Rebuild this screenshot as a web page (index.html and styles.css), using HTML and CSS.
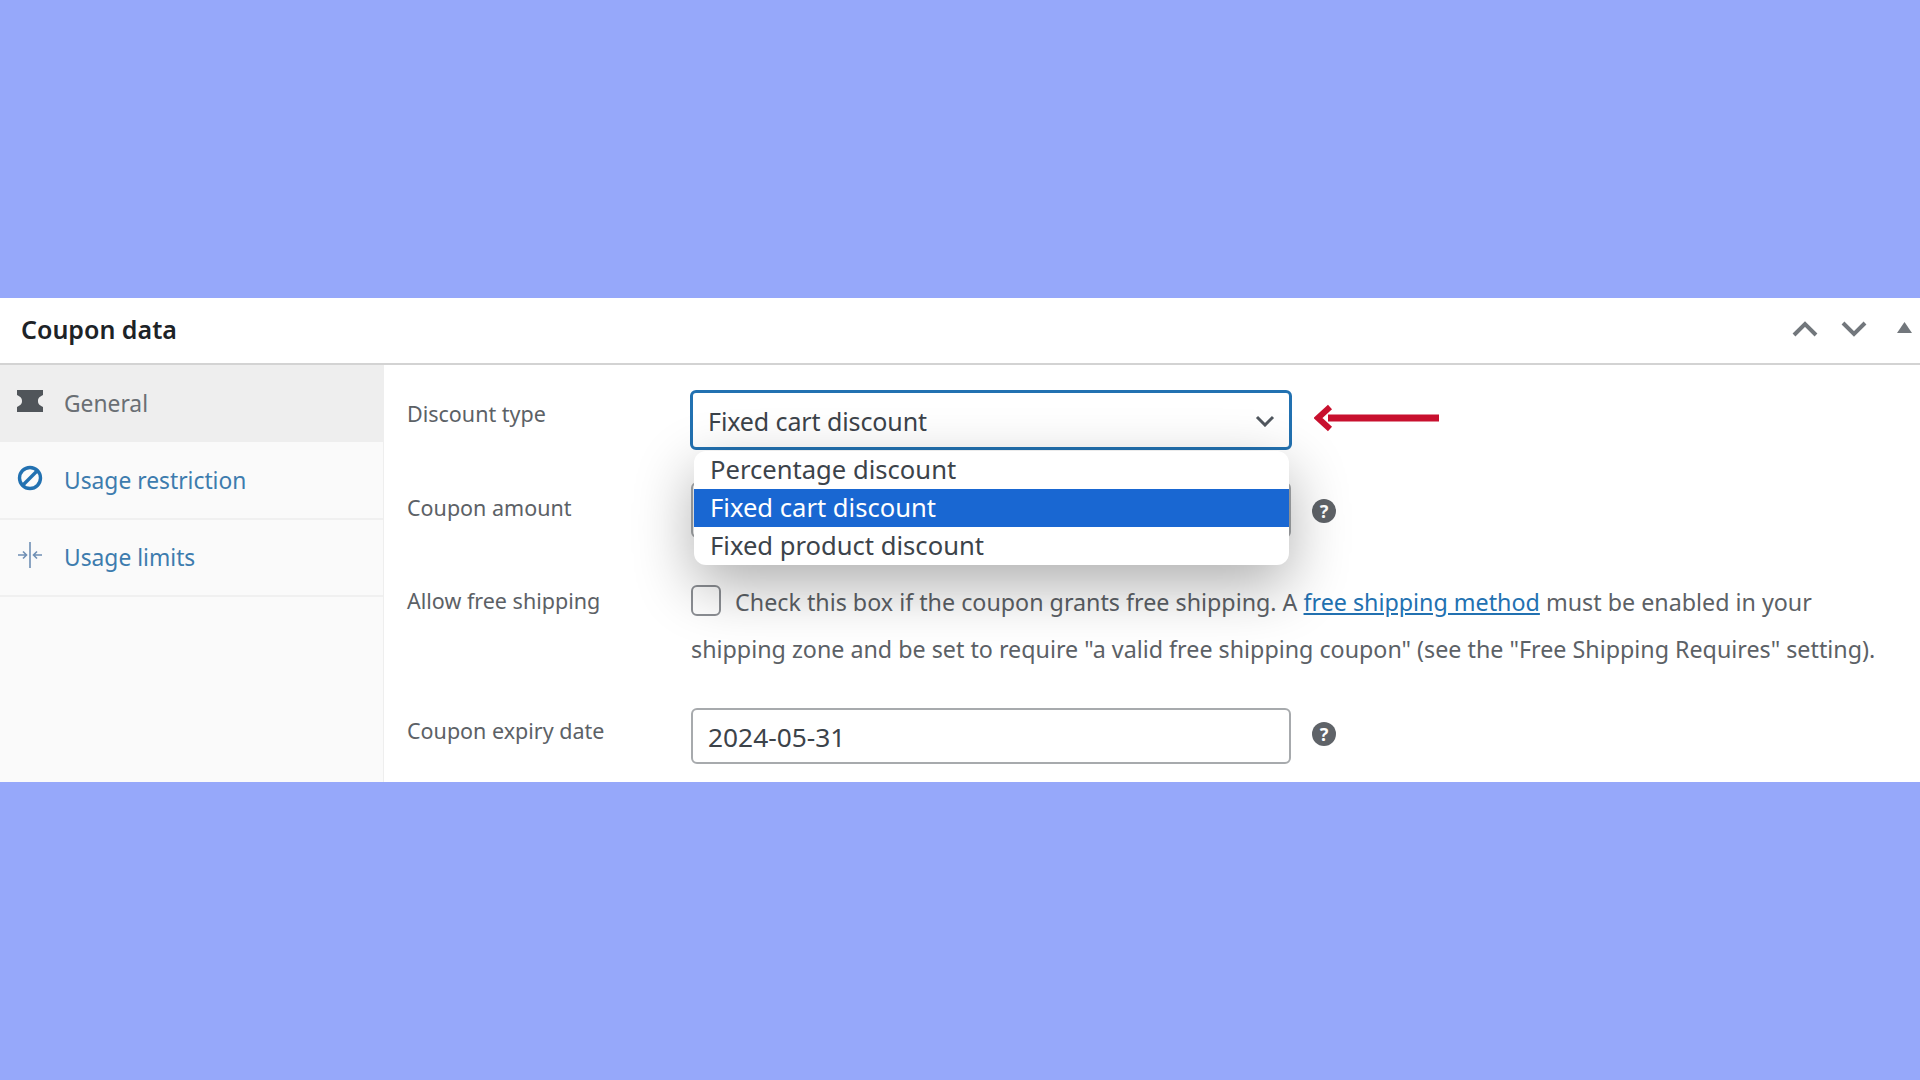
FILE: index.html
```html
<!DOCTYPE html>
<html lang="en">
<head>
  <meta charset="UTF-8">
  <title>Coupon data</title>
  <link rel="stylesheet" href="styles.css">
</head>
<body>

<div class="coupon-box">
  <div class="box-header">
    <h2>Coupon data</h2>
    <div class="box-actions">
      <svg width="26" height="16" viewBox="0 0 26 16"><path d="M2 14 L13 3 L24 14" /></svg>
      <svg width="26" height="16" viewBox="0 0 26 16"><path d="M2 2 L13 13 L24 2" /></svg>
      <svg class="toggle" width="15" height="11" viewBox="0 0 15 11"><polygon points="7.5,0 15,11 0,11" /></svg>
    </div>
  </div>

  <div class="box-body">
    <ul class="tabs">
      <li class="tab active">
        <svg width="26" height="22" viewBox="0 0 26 22"><path fill="#50555a" d="M0 0 H26 V5 C22 7 21 8.5 21 11 C21 13.5 22 15 26 17 V22 H0 V17 C4 15 5 13.5 5 11 C5 8.5 4 7 0 5 Z" /></svg>
        <span>General</span>
      </li>
      <li class="tab">
        <svg width="26" height="26" viewBox="0 0 26 26"><circle cx="13" cy="13" r="10.5" fill="none" stroke="#2271b1" stroke-width="3.4" /><path d="M6 20 L20 6" stroke="#2271b1" stroke-width="3.4" /></svg>
        <span>Usage restriction</span>
      </li>
      <li class="tab">
        <svg width="26" height="26" viewBox="0 0 26 26"><g stroke="#6f8fb4" fill="none" stroke-width="1.6"><path d="M13 0 V26" /><path d="M1 13 H9 M6 9.5 L9.5 13 L6 16.5" /><path d="M25 13 H17 M20 9.5 L16.5 13 L20 16.5" /></g></svg>
        <span>Usage limits</span>
      </li>
    </ul>

    <div class="panel">
      <div class="row row-type">
        <label>Discount type</label>
        <div class="select-wrap">
          <div class="select">
            <span>Fixed cart discount</span>
            <svg width="20" height="12" viewBox="0 0 20 12"><path d="M2 2 L10 10 L18 2" /></svg>
          </div>
          <ul class="options">
            <li>Percentage discount</li>
            <li class="selected">Fixed cart discount</li>
            <li>Fixed product discount</li>
          </ul>
        </div>
        <svg class="arrow" width="126" height="30" viewBox="0 0 126 30"><path d="M14 15 H125" stroke="#c8102e" stroke-width="7" /><path d="M16 4 L4 15 L16 26" fill="none" stroke="#c8102e" stroke-width="6" /></svg>
      </div>

      <div class="row row-amount">
        <label>Coupon amount</label>
        <input class="field" type="text">
        <span class="help">?</span>
      </div>

      <div class="row row-shipping">
        <label>Allow free shipping</label>
        <p class="shipping-text">
          <input class="check" type="checkbox">
          Check this box if the coupon grants free shipping. A <a href="#">free shipping method</a> must be enabled in your<br>
          shipping zone and be set to require "a valid free shipping coupon" (see the "Free Shipping Requires" setting).
        </p>
      </div>

      <div class="row row-expiry">
        <label>Coupon expiry date</label>
        <input class="field" type="text" value="2024-05-31">
        <span class="help">?</span>
      </div>
    </div>
  </div>
</div>

</body>
</html>
```

FILE: styles.css
```css
* {
  box-sizing: border-box;
}

body {
  margin: 0;
  height: 1080px;
  background: #96a8fa;
  font-family: "Noto Sans", "Open Sans", sans-serif;
  color: #50575e;
  display: flex;
  flex-direction: column;
  justify-content: center;
  overflow: hidden;
}

.coupon-box {
  height: 484px;
  background: #fff;
  overflow: hidden;
}

.box-header {
  height: 67px;
  display: flex;
  align-items: center;
  justify-content: space-between;
  padding: 0 0 3px 21px;
  border-bottom: 2px solid #d3d3d3;
}

.box-header h2 {
  margin: 0;
  font-size: 25px;
  font-weight: 600;
  color: #1d2327;
}

.box-actions {
  display: flex;
  align-items: center;
  gap: 23px;
  margin-right: 8px;
}

.box-actions path {
  fill: none;
  stroke: #72777c;
  stroke-width: 4;
}

.box-actions polygon {
  fill: #72777c;
}

.box-actions .toggle {
  margin-left: 7px;
  margin-top: -4px;
}

.box-body {
  display: flex;
  height: 417px;
}

.tabs {
  width: 384px;
  flex: none;
  margin: 0;
  padding: 0;
  list-style: none;
  background: #fafafa;
  border-right: 1px solid #eee;
}

.tab {
  height: 77.5px;
  display: flex;
  align-items: center;
  gap: 21px;
  padding: 1px 0 0 17px;
  font-size: 22.8px;
  color: #3d7cae;
  border-bottom: 2px solid #f0f0f0;
}

.tab svg {
  flex: none;
  margin-top: -5px;
}

.tab.active {
  height: 77px;
  padding-top: 0;
  background: #eee;
  color: #6a6f74;
  border-bottom: 0;
}

.panel {
  flex: 1;
  min-width: 0;
  padding: 25px 0 0 23px;
  background: #fff;
}

.row {
  display: flex;
  align-items: flex-start;
}

.row label {
  width: 283px;
  flex: none;
  font-size: 21.5px;
  color: #5c6166;
}

.row-type {
  height: 92px;
}

.row-type label {
  padding-top: 9px;
}

.select-wrap {
  position: relative;
  width: 602px;
}

.select {
  height: 60px;
  display: flex;
  align-items: center;
  justify-content: space-between;
  padding: 2px 14px 0 15px;
  border: 3px solid #2271b1;
  border-radius: 6px;
  font-size: 25px;
  letter-spacing: -0.1px;
  color: #3c434a;
  background: #fff;
}

.select path {
  fill: none;
  stroke: #50575e;
  stroke-width: 3;
}

.options {
  position: absolute;
  z-index: 2;
  top: 61px;
  left: 4px;
  width: 595px;
  margin: 0;
  padding: 0;
  list-style: none;
  background: #fff;
  border-radius: 12px;
  overflow: hidden;
  box-shadow: 0 20px 60px rgba(0, 0, 0, 0.32);
  font-size: 25.6px;
  color: #3c434a;
}

.options li {
  height: 38px;
  line-height: 38px;
  padding-left: 16px;
}

.options .selected {
  background: #1967d2;
  color: #fff;
}

.arrow {
  margin: 13px 0 0 22px;
}

.row-amount {
  height: 96px;
}

.row-amount label {
  padding-top: 11px;
}

.field {
  width: 600px;
  height: 56px;
  margin-left: 1px;
  padding: 2px 15px 0;
  border: 2px solid #a7aaad;
  border-radius: 6px;
  font-family: inherit;
  font-size: 26.3px;
  color: #3c434a;
  background: #fff;
}

.help {
  width: 24px;
  height: 24px;
  margin: 17px 0 0 21px;
  border-radius: 50%;
  background: #5f6368;
  color: #fff;
  font-size: 18px;
  font-weight: 700;
  line-height: 24px;
  text-align: center;
}

.row-shipping {
  height: 130px;
}

.row-shipping label {
  padding-top: 8px;
}

.row-expiry label {
  padding-top: 8px;
}

.row-expiry .help {
  margin-top: 14px;
}

.shipping-text {
  margin: 1px 0 0 1px;
  width: 1240px;
  font-size: 23.27px;
  line-height: 47px;
  color: #5c6166;
}

.shipping-text a {
  color: #2271b1;
}

.check {
  appearance: none;
  width: 30px;
  height: 31px;
  margin: -9px 8px 0 0;
  vertical-align: middle;
  border: 2px solid #8c8f94;
  border-radius: 6px;
  background: #fff;
}
```
